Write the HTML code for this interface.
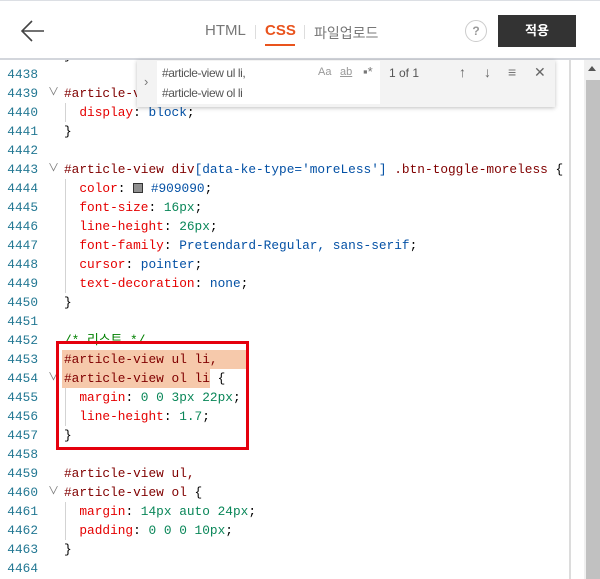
<!DOCTYPE html>
<html><head><meta charset="utf-8"><style>
*{margin:0;padding:0;box-sizing:border-box}
body{width:600px;height:579px;overflow:hidden;background:#fff;position:relative;font-family:"Liberation Sans","Noto Sans CJK KR",sans-serif}
#hdr{position:absolute;left:0;top:0;width:600px;height:60px;background:#fff;border-top:1px solid #dcdfe4;border-bottom:2px solid #d3d6dc;z-index:3}
.tab{position:absolute;top:21px;font-size:15px;color:#777}
#code{position:absolute;left:0;top:0;width:569px;height:579px;overflow:hidden;font-family:"Liberation Mono","Noto Sans CJK KR",monospace;font-size:12.8px;z-index:1}
.ln{position:absolute;left:0;width:38px;text-align:right;color:#237893;height:19px;line-height:19px}
.cl{position:absolute;left:64px;white-space:pre;height:19px;line-height:19px;color:#000}
.fd{position:absolute;left:48px;color:#777;font-size:11px;line-height:19px}
.s{color:#800000}.p{color:#e50000}.n{color:#098658}.v{color:#0451a5}.c{color:#008000}
.guide{position:absolute;left:65px;width:1px;background:#d3d3d3}
</style></head><body>
<div style="position:absolute;left:62px;top:350px;width:186px;height:19px;background:#f6c9ab;z-index:0"></div>
<div style="position:absolute;left:62px;top:369px;width:148px;height:19px;background:#f6c9ab;z-index:0"></div>
<div id="code"></div>
<div class="guide" style="top:103px;height:19px"></div>
<div class="guide" style="top:179px;height:114px"></div>
<div class="guide" style="top:388px;height:38px"></div>
<div class="guide" style="top:502px;height:38px"></div>
<div style="position:absolute;left:56px;top:341px;width:193px;height:109px;border:3px solid #e5000d;z-index:2"></div>
<div style="position:absolute;left:569px;top:60px;width:2px;height:519px;background:#dcdcdc"></div>
<div style="position:absolute;left:584px;top:60px;width:16px;height:519px;background:#f0f0f0"></div>
<div style="position:absolute;left:586px;top:80px;width:14px;height:499px;background:#c1c1c1"></div>
<div style="position:absolute;left:588px;top:66px;width:0;height:0;border-left:4px solid transparent;border-right:4px solid transparent;border-bottom:5px solid #555"></div>
<div id="hdr">
<svg style="position:absolute;left:21px;top:19px" width="24" height="22" viewBox="0 0 24 22"><path d="M23 11H2M11 1L1 11l10 10" fill="none" stroke="#444" stroke-width="1.6"/></svg>
<div class="tab" style="left:205px">HTML</div>
<div style="position:absolute;left:255px;top:24px;width:1px;height:14px;background:#ddd"></div>
<div class="tab" style="left:265px;color:#e9531d;font-weight:bold">CSS</div>
<div style="position:absolute;left:265px;top:43px;width:30px;height:2px;background:#e9531d"></div>
<div style="position:absolute;left:304px;top:24px;width:1px;height:14px;background:#ddd"></div>
<div class="tab" style="left:314px;font-size:14px;top:22px">파일업로드</div>
<div style="position:absolute;left:465px;top:19px;width:22px;height:22px;border:1px solid #ccc;border-radius:50%;text-align:center;font-size:12px;font-weight:bold;color:#999;line-height:20px">?</div>
<div style="position:absolute;left:498px;top:14px;width:78px;height:32px;background:#333;color:#fff;font-size:13px;text-align:center;line-height:32px;font-weight:bold">적용</div>
</div>
<div style="position:absolute;left:137px;top:60px;width:418px;height:47px;background:#f3f3f3;box-shadow:0 1px 4px rgba(0,0,0,.25);z-index:4;font-size:12px;color:#555">
<div style="position:absolute;left:7px;top:14px;color:#777;font-size:13px">›</div>
<div style="position:absolute;left:20px;top:1px;width:223px;height:43px;background:#fff"></div>
<div style="position:absolute;left:25px;top:6px;letter-spacing:-0.4px">#article-view ul li,</div>
<div style="position:absolute;left:25px;top:26px;letter-spacing:-0.4px">#article-view ol li</div>
<div style="position:absolute;left:181px;top:6px;color:#999;font-size:11px">Aa</div>
<div style="position:absolute;left:203px;top:6px;color:#999;font-size:11px;text-decoration:underline">ab</div>
<div style="position:absolute;left:226px;top:4px;color:#777;font-size:13px">▪*</div>
<div style="position:absolute;left:252px;top:6px;color:#555">1 of 1</div>
<div style="position:absolute;left:322px;top:4px;color:#666;font-size:14px">↑</div>
<div style="position:absolute;left:347px;top:4px;color:#666;font-size:14px">↓</div>
<div style="position:absolute;left:371px;top:4px;color:#777;font-size:14px">≡</div>
<div style="position:absolute;left:397px;top:4px;color:#666;font-size:14px">✕</div>
</div>
<script>
const L=[
[4437,'<span>}</span>'],
[4438,''],
[4439,'<span class="s">#article-view div[data-ke-type=\'moreLess\'].ke-t</span>                   <span class="s">nt</span> {',1],
[4440,'  <span class="p">display</span>: <span class="v">block</span>;'],
[4441,'}'],
[4442,''],
[4443,'<span class="s">#article-view div</span><span class="v">[data-ke-type=\'moreLess\']</span><span class="s"> .btn-toggle-moreless</span> {',1],
[4444,'  <span class="p">color</span>: <span style="display:inline-block;width:10px;height:10px;background:#909090;border:1px solid #333;vertical-align:-1px"></span> <span class="v">#909090</span>;'],
[4445,'  <span class="p">font-size</span>: <span class="n">16px</span>;'],
[4446,'  <span class="p">line-height</span>: <span class="n">26px</span>;'],
[4447,'  <span class="p">font-family</span>: <span class="v">Pretendard-Regular, sans-serif</span>;'],
[4448,'  <span class="p">cursor</span>: <span class="v">pointer</span>;'],
[4449,'  <span class="p">text-decoration</span>: <span class="v">none</span>;'],
[4450,'}'],
[4451,''],
[4452,'<span class="c">/* 리스트 */</span>'],
[4453,'<span class="s">#article-view ul li,</span>'],
[4454,'<span class="s">#article-view ol li</span> {',1],
[4455,'  <span class="p">margin</span>: <span class="n">0 0 3px 22px</span>;'],
[4456,'  <span class="p">line-height</span>: <span class="n">1.7</span>;'],
[4457,'}'],
[4458,''],
[4459,'<span class="s">#article-view ul,</span>'],
[4460,'<span class="s">#article-view ol</span> {',1],
[4461,'  <span class="p">margin</span>: <span class="n">14px auto 24px</span>;'],
[4462,'  <span class="p">padding</span>: <span class="n">0 0 0 10px</span>;'],
[4463,'}'],
[4464,'']];
let h='';
for(const [n,t,f] of L){const y=65+19*(n-4438);
if(n>4437)h+=`<div class="ln" style="top:${y}px">${n}</div>`;
if(f)h+=`<div class="fd" style="top:${y}px">∨</div>`;
h+=`<div class="cl" style="top:${y}px">${t}</div>`;}
document.getElementById('code').innerHTML=h;
</script>
</body></html>
